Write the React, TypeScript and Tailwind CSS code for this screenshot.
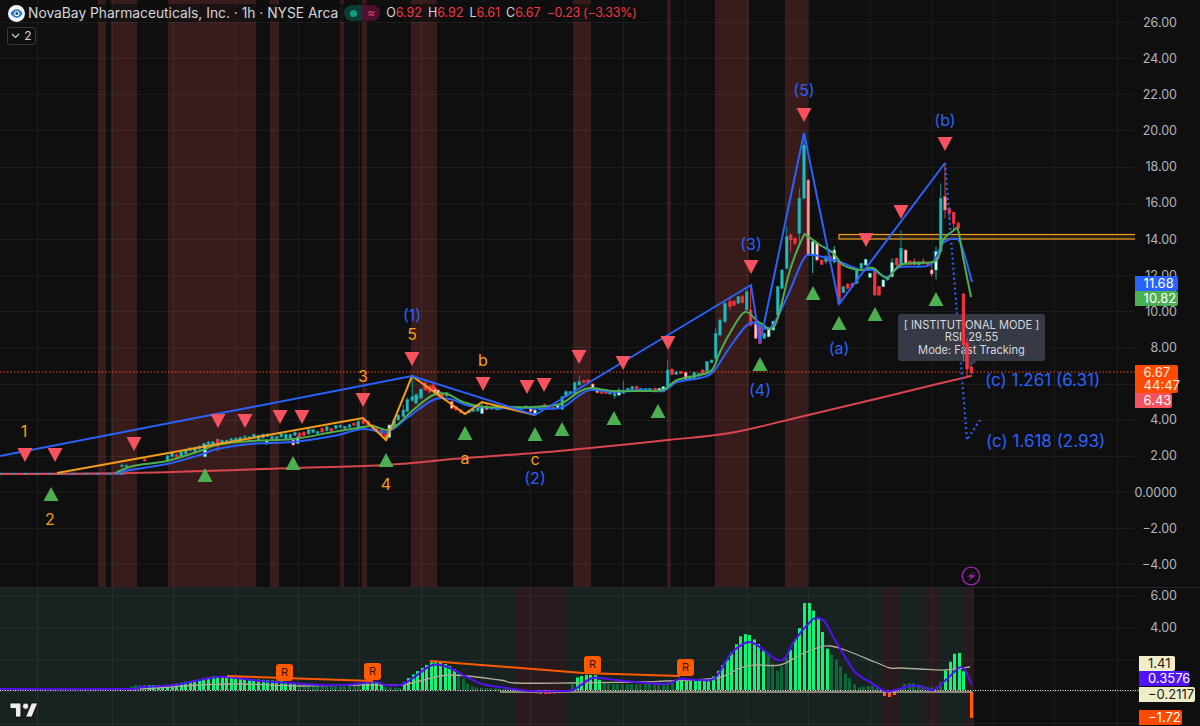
import React from "react";

type P = [number, number];
type C = [number, number, number, number?, number?, string?];

const XS = [37, 112, 173, 235, 298, 359, 421, 482, 530, 623, 685, 747, 808, 870, 932, 993, 1054, 1117];
const TOP_STRIPES: P[] = [[98, 106], [111, 137], [168, 256], [270, 279], [340, 344], [362, 367], [411, 437], [573, 591], [667, 671], [715, 749], [785, 808]];
const BOT_STRIPES: P[] = [[516, 565], [882, 900], [926, 939], [966, 974]];
const PRICES = ["26.00", "24.00", "22.00", "20.00", "18.00", "16.00", "14.00", "12.00", "10.00", "8.00", "", "4.00", "2.00", "0.0000", "−2.00", "−4.00"];

const BLUE: P[] = [[115, 473.5], [130, 470], [167, 464], [200, 455], [217, 449], [250, 444], [293, 442], [333, 436], [363, 429], [387, 432], [407, 418], [433, 400], [450, 399], [470, 406], [500, 408], [533, 408], [560, 408], [577, 397], [590, 390], [613, 392], [640, 390], [663, 391], [677, 382], [700, 378], [713, 372], [730, 347], [750, 323], [770, 328], [787, 297], [803, 260], [813, 255], [833, 260], [843, 263], [860, 270], [873, 270], [887, 277], [900, 267], [930, 265], [943, 243], [957, 239], [963, 250], [972, 282]];
const GREEN: P[] = [[115, 473], [133, 466], [167, 461], [200, 451], [217, 445], [250, 441], [293, 439], [333, 432], [363, 427], [373, 426], [387, 430], [397, 425], [413, 410], [433, 395], [447, 394], [463, 402], [483, 407], [500, 407], [533, 407], [560, 404], [577, 393], [590, 388], [613, 391], [640, 391], [663, 390], [677, 380], [700, 375], [712, 370], [720, 352], [730, 333], [745, 312], [760, 323], [775, 325], [790, 270], [803, 237], [807, 236], [820, 245], [833, 253], [843, 265], [860, 270], [873, 268], [887, 278], [900, 265], [920, 263], [937, 260], [943, 240], [953, 231], [958, 230], [963, 257], [971, 297]];
const RED: P[] = [[0, 474], [133, 473], [293, 468], [386, 465], [465, 458], [535, 453], [600, 447], [668, 440], [730, 433], [800, 417], [880, 398], [933, 385], [967, 377], [972, 376]];
const WAVE_BLUE: P[] = [[0, 456], [412, 376], [535, 415], [751, 285], [760, 343], [804, 133], [839, 304], [945, 163]];
const WAVE_ORANGE: P[] = [[57, 473], [363, 418], [386, 440], [412, 376], [465, 414], [482, 402], [535, 415]];
const DOWN: P[] = [[25, 448], [55, 448], [134, 437], [218, 414], [245, 414], [280, 410], [302, 410], [363, 393], [412, 352], [483, 377], [527, 380], [544, 378], [579, 350], [623, 356], [668, 336], [751, 260], [804, 108], [866, 233], [901, 205], [945, 137]];
const UP: P[] = [[51, 487], [205, 468], [293, 456], [386, 453], [465, 426], [535, 427], [562, 422], [614, 411], [658, 404], [760, 357], [813, 286], [839, 316], [875, 307], [936, 292]];
const ORANGE_LABELS: [string, number, number][] = [["1", 24, 431], ["2", 50, 519], ["3", 363, 376], ["4", 386, 484], ["5", 412, 334], ["a", 465, 458], ["b", 483, 360], ["c", 535, 459]];
const BLUE_LABELS: [string, number, number][] = [["(1)", 412, 315], ["(2)", 535, 478], ["(3)", 751, 244], ["(4)", 760, 390], ["(5)", 804, 90], ["(a)", 839, 348], ["(b)", 945, 120]];

const Z5: C[] = [[615, 255, 290, 250, 292, "w"], [653, 240, 258, 238, 275, "r"], [800, 240, 252, 238, 254, "w"], [880, 240, 255, 238, 256, "h"], [893, 232, 250, 228, 252, "w"], [1075, 185, 205, 180, 208, "t"], [1090, 180, 190, 178, 192, "r"], [1105, 185, 195, 182, 197, "r"], [1118, 195, 205, 193, 207, "r"], [1130, 200, 212, 198, 214, "r"], [1145, 210, 225, 208, 227, "r"], [1158, 222, 240, 220, 242, "r"], [1168, 195, 232, 193, 234, "w"], [1183, 178, 198, 175, 200, "t"], [1195, 165, 180, 163, 182, "t"], [1210, 150, 170, 135, 172, "t"], [1222, 118, 155, 112, 157, "t"], [1237, 110, 122, 50, 125, "t"], [1250, 105, 120, 100, 122, "t"], [1263, 88, 115, 85, 117, "t"], [1277, 75, 90, 65, 92, "r"], [1290, 78, 95, 75, 97, "r"], [1305, 85, 100, 80, 102, "h"], [1318, 95, 110, 90, 112, "r"]];
const Z7: C[] = [[48, 165, 190, 160, 192, "t"], [63, 148, 170, 145, 172, "t"], [75, 130, 148, 125, 150, "r"], [88, 140, 150, 138, 160, "r"], [100, 135, 150, 130, 152, "r"], [114, 150, 165, 148, 167, "h"], [127, 160, 170, 158, 172, "r"], [140, 158, 168, 156, 170, "t"], [155, 185, 205, 182, 207, "h"], [168, 200, 210, 198, 212, "r"], [182, 210, 218, 208, 220, "r"], [195, 218, 222, 216, 224, "r"], [208, 212, 218, 210, 220, "t"], [220, 208, 214, 206, 216, "t"], [233, 203, 213, 200, 215, "t"], [246, 200, 220, 185, 222, "w"], [260, 198, 208, 190, 210, "h"], [275, 203, 207, 201, 209, "t"], [290, 205, 208, 203, 210, "t"], [300, 203, 208, 201, 210, "t"], [315, 200, 205, 198, 207, "r"], [330, 203, 206, 201, 208, "r"], [350, 205, 207, 203, 209, "t"], [365, 203, 208, 201, 210, "t"], [378, 198, 205, 196, 207, "t"], [392, 203, 215, 201, 217, "h"], [405, 210, 220, 207, 222, "w"], [420, 205, 208, 203, 210, "t"], [433, 195, 200, 190, 202, "r"], [447, 202, 206, 200, 208, "r"], [460, 202, 206, 200, 208, "r"], [473, 197, 205, 195, 207, "w"], [487, 170, 208, 168, 210, "t"], [498, 155, 170, 150, 172, "t"], [511, 155, 162, 153, 164, "t"], [524, 128, 160, 125, 162, "t"], [538, 125, 135, 107, 137, "t"], [552, 122, 128, 120, 130, "r"], [565, 120, 128, 118, 130, "r"], [578, 132, 150, 130, 152, "h"], [592, 145, 158, 143, 160, "h"], [605, 155, 160, 153, 162, "r"], [618, 155, 160, 153, 162, "r"], [630, 155, 162, 153, 164, "t"], [644, 160, 168, 158, 177, "t"], [657, 150, 165, 145, 168, "w"], [670, 150, 160, 122, 162, "t"], [684, 145, 150, 143, 152, "t"], [697, 140, 148, 138, 150, "t"], [710, 140, 147, 138, 149, "r"], [723, 145, 148, 143, 150, "t"], [737, 146, 150, 144, 152, "t"], [750, 146, 150, 144, 152, "t"], [765, 145, 155, 143, 157, "r"], [778, 145, 152, 143, 154, "w"], [790, 140, 155, 138, 157, "w"], [803, 90, 138, 62, 140, "t"], [816, 88, 103, 85, 105, "r"], [829, 95, 103, 93, 105, "t"], [843, 95, 100, 93, 102, "r"], [857, 97, 118, 95, 120, "h"], [870, 108, 117, 106, 119, "t"], [883, 97, 118, 95, 120, "t"], [897, 100, 108, 98, 110, "t"], [908, 90, 100, 88, 102, "r"], [921, 65, 95, 63, 97, "t"], [935, 60, 68, 58, 70, "t"]];
const Z6: C[] = [[107, 760, 835, 745, 840, "t"], [120, 720, 765, 715, 770, "t"], [135, 670, 725, 665, 730, "t"], [150, 665, 680, 650, 690, "r"], [162, 665, 675, 660, 680, "r"], [175, 650, 670, 648, 672, "t"], [187, 650, 668, 645, 670, "r"], [200, 635, 690, 630, 692, "t"], [212, 690, 735, 615, 740, "r"], [227, 725, 775, 722, 778, "h"], [240, 740, 790, 738, 792, "r"], [253, 760, 775, 758, 778, "t"], [266, 745, 770, 742, 772, "w"], [280, 725, 750, 722, 752, "w"], [293, 620, 705, 618, 708, "t"], [306, 570, 625, 568, 628, "t"], [320, 470, 565, 440, 568, "t"], [332, 465, 480, 460, 515, "r"], [345, 475, 490, 472, 495, "r"], [358, 355, 460, 325, 490, "t"], [372, 195, 355, 160, 358, "t"], [385, 300, 525, 298, 528, "p"], [398, 485, 525, 482, 580, "w"], [411, 490, 540, 488, 545, "h"], [425, 540, 553, 538, 555, "r"], [438, 530, 545, 525, 553, "t"], [450, 530, 545, 525, 550, "r"], [463, 510, 545, 498, 550, "w"], [477, 545, 670, 542, 672, "r"], [490, 620, 638, 618, 640, "t"], [503, 612, 625, 610, 627, "r"], [517, 610, 620, 608, 622, "r"], [530, 565, 610, 563, 612, "t"], [544, 550, 565, 548, 567, "t"], [557, 538, 555, 536, 557, "w"], [570, 580, 592, 578, 594, "w"], [584, 575, 645, 573, 647, "r"], [597, 620, 645, 618, 647, "r"], [610, 600, 620, 598, 622, "w"], [623, 590, 600, 588, 602, "t"], [636, 548, 590, 535, 592, "w"], [650, 535, 555, 533, 557, "r"], [663, 505, 555, 450, 557, "t"], [677, 510, 552, 508, 554, "h"], [690, 543, 553, 541, 555, "r"], [703, 545, 553, 535, 555, "h"], [717, 545, 555, 543, 557, "t"], [730, 543, 552, 535, 554, "r"], [743, 548, 553, 546, 555, "r"], [755, 570, 582, 555, 590, "h"], [768, 515, 570, 500, 598, "w"], [782, 355, 515, 310, 517, "t"], [795, 350, 390, 248, 415, "p"], [808, 385, 400, 380, 415, "r"], [821, 397, 430, 395, 450, "r"], [835, 430, 445, 425, 450, "r"]];

const ENV: P[] = [[120, 689], [127, 688], [135, 685], [167, 685], [180, 683], [200, 679], [215, 676], [225, 676], [250, 679], [280, 681], [295, 683], [300, 684], [320, 685], [345, 686], [365, 683], [380, 683], [385, 687], [400, 688], [405, 681], [415, 673], [425, 666], [432, 662], [440, 662], [452, 667], [460, 675], [470, 686], [480, 688], [510, 689], [525, 690], [570, 690], [575, 678], [585, 675], [595, 675], [600, 680], [610, 684], [670, 684], [675, 681], [710, 680], [715, 675], [720, 668], [727, 660], [733, 650], [737, 643], [741, 636], [745, 634], [750, 635], [755, 640], [760, 645], [765, 653], [770, 655], [775, 671], [780, 670], [785, 660], [790, 652], [795, 640], [800, 628], [803, 603], [810, 603], [812, 609], [816, 613], [821, 624], [825, 643], [829, 653], [834, 656], [839, 663], [844, 672], [849, 677], [854, 684], [860, 688], [865, 686], [875, 686], [880, 690], [900, 690], [903, 684], [913, 683], [920, 685], [930, 688], [940, 686], [943, 675], [948, 666], [953, 656], [958, 649], [963, 665], [966, 690]];
const BRIGHT: P[] = [[145, 296], [360, 384], [404, 458], [573, 602], [675, 767], [790, 828], [943, 966]];
const PURPLE: P[] = [[0, 689], [127, 689], [140, 687], [175, 685], [210, 678], [227, 677], [260, 681], [290, 683], [320, 685], [345, 685], [375, 682], [385, 685], [400, 685], [410, 680], [430, 666], [440, 665], [450, 668], [465, 676], [482, 684], [500, 687], [530, 691], [565, 691], [575, 689], [590, 679], [600, 678], [625, 681], [665, 684], [680, 679], [700, 680], [715, 678], [730, 655], [745, 643], [755, 644], [770, 655], [778, 660], [785, 658], [795, 640], [810, 622], [817, 618], [825, 622], [835, 640], [855, 672], [870, 682], [885, 691], [895, 690], [910, 686], [920, 686], [933, 690], [948, 678], [962, 667], [972, 685]];
const PALE: P[] = [[127, 690], [200, 685], [240, 684], [300, 686], [360, 685], [400, 685], [420, 681], [450, 675], [500, 680], [515, 683], [570, 683], [640, 682], [665, 681], [717, 678], [740, 668], [755, 665], [780, 665], [800, 655], [820, 647], [830, 646], [845, 650], [875, 662], [890, 668], [900, 668], [920, 669], [945, 670], [970, 667]];

const interp = (a: P[], x: number) => {
  for (let i = 1; i < a.length; i++) {
    if (x <= a[i][0]) {
      const [x0, y0] = a[i - 1];
      const [x1, y1] = a[i];
      return y0 + ((y1 - y0) * (x - x0)) / (x1 - x0);
    }
  }
  return a[a.length - 1][1];
};
const rnd = (i: number) => {
  const s = Math.sin(i * 12.9898) * 43758.5453;
  return s - Math.floor(s);
};
const line = (a: P[]) => a.map((p) => p.join(",")).join(" ");
const smooth = (a: P[]) => {
  let d = `M${a[0][0]} ${a[0][1]}`;
  for (let i = 0; i < a.length - 1; i++) {
    const p0 = a[Math.max(i - 1, 0)];
    const p1 = a[i];
    const p2 = a[i + 1];
    const p3 = a[Math.min(i + 2, a.length - 1)];
    d += ` C${p1[0] + (p2[0] - p0[0]) / 6} ${p1[1] + (p2[1] - p0[1]) / 6} ${p2[0] - (p3[0] - p1[0]) / 6} ${p2[1] - (p3[1] - p1[1]) / 6} ${p2[0]} ${p2[1]}`;
  }
  return d;
};

const KIND: Record<string, [string, string]> = {
  t: ["#1fbcc4", "#178f88"],
  r: ["#f5333f", "#f5333f"],
  w: ["#d8f5ef", "#1fb5b5"],
  h: ["#f7dcdc", "#f5333f"],
  p: ["#ef9a9a", "#e5404c"],
};

function Candle({ x, t, b, wt, wb, k }: { x: number; t: number; b: number; wt: number; wb: number; k: string }) {
  const [fill, edge] = KIND[k];
  return (
    <g>
      <line x1={x} x2={x} y1={wt} y2={wb} stroke={edge} strokeWidth={1} />
      <rect x={x - 1.4} y={t} width={2.8} height={Math.max(b - t, 1.5)} fill={fill} stroke={edge} strokeWidth={0.5} />
    </g>
  );
}

function conv(list: C[], ox: number, oy: number) {
  return list.map(([zx, t, b, wt, wb, k], i) => (
    <Candle key={`${ox}-${i}`} x={ox + zx / 3} t={oy + t / 3} b={oy + b / 3} wt={oy + (wt ?? t) / 3} wb={oy + (wb ?? b) / 3} k={k ?? "t"} />
  ));
}

function smallCandles() {
  const out: React.ReactNode[] = [];
  for (let x = 122, i = 0; x < 358; x += 4.55, i++) {
    if (x < 165 && rnd(i + 7) > 0.35) continue;
    const g = interp(GREEN, x) - 2;
    const size = x < 150 ? 1.5 : 1.5 + rnd(i) * 3;
    const r = rnd(i + 50) > 0.78;
    const y = g - rnd(i + 90) * 3;
    out.push(<Candle key={i} x={x} t={y - size / 2} b={y + size / 2} wt={y - size / 2 - 1} wb={y + size / 2 + 1} k={r ? "r" : "t"} />);
  }
  return out;
}

function Tri({ x, y, up }: { x: number; y: number; up?: boolean }) {
  return up ? (
    <polygon points={`${x - 7.5},${y + 14} ${x + 7.5},${y + 14} ${x},${y}`} fill="#4caf50" />
  ) : (
    <polygon points={`${x - 7.5},${y} ${x + 7.5},${y} ${x},${y + 14}`} fill="#f7525f" />
  );
}

function Grid({ ys, height, top }: { ys: number[]; height: number; top: number }) {
  return (
    <g stroke="#ffffff" strokeOpacity={0.055} strokeWidth={1}>
      {XS.map((x) => (
        <line key={x} x1={x + 0.5} x2={x + 0.5} y1={top} y2={top + height} />
      ))}
      {ys.map((y) => (
        <line key={y} x1={0} x2={1139} y1={y + 0.5} y2={y + 0.5} />
      ))}
    </g>
  );
}

function PriceChart() {
  const ys = Array.from({ length: 16 }, (_, i) => Math.round(22 + i * 36.15));
  return (
    <svg className="absolute inset-0" width={1139} height={587} viewBox="0 0 1139 587">
      {TOP_STRIPES.map(([a, b]) => (
        <rect key={a} x={a} y={0} width={b - a} height={587} fill="#381c1c" />
      ))}
      <Grid ys={ys} height={587} top={0} />
      <line x1={0} x2={1139} y1={372} y2={372} stroke="#ff4a00" strokeWidth={1} strokeDasharray="1.5 2" />
      <rect x={839} y={234.5} width={310} height={4.5} fill="#f59e1b" fillOpacity={0.12} stroke="#f59e1b" strokeWidth={1.2} />
      <line x1={0} x2={125} y1={473.8} y2={473.8} stroke="#2962ff" strokeWidth={2} />
      <path d={smooth(RED)} fill="none" stroke="#d9464f" strokeWidth={2} />
      <line x1={0} x2={125} y1={473.8} y2={473.8} stroke="#1fb5b5" strokeWidth={1} strokeDasharray="3 9" />
      {smallCandles()}
      {conv(Z5, 0, 360)}
      {conv(Z7, 400, 340)}
      {conv(Z6, 680, 80)}
      <path d={smooth(BLUE)} fill="none" stroke="#2962ff" strokeWidth={2} />
      <path d={smooth(GREEN)} fill="none" stroke="#4caf50" strokeWidth={2} />
      <polyline points={line(WAVE_ORANGE)} fill="none" stroke="#f59e1b" strokeWidth={2} />
      <polyline points={line(WAVE_BLUE)} fill="none" stroke="#2962ff" strokeWidth={2} />
      <polyline points="945,163 967,440 980,420" fill="none" stroke="#2962ff" strokeWidth={2.2} strokeDasharray="2 3" />
      {DOWN.map(([x, y]) => (
        <Tri key={x} x={x} y={y} />
      ))}
      {UP.map(([x, y]) => (
        <Tri key={x} x={x} y={y} up />
      ))}
      <g className="text-[16px]" textAnchor="middle" dominantBaseline="central">
        {ORANGE_LABELS.map(([s, x, y]) => (
          <text key={s} x={x} y={y} fill="#f59e1b">
            {s}
          </text>
        ))}
        {BLUE_LABELS.map(([s, x, y]) => (
          <text key={s} x={x} y={y} fill="#2962ff">
            {s}
          </text>
        ))}
      </g>
      <g className="text-[17px]" dominantBaseline="central" fill="#2962ff">
        <text x={985} y={380}>(c) 1.261 (6.31)</text>
        <text x={986} y={441}>(c) 1.618 (2.93)</text>
      </g>
      <circle cx={971} cy={576} r={8.8} fill="none" stroke="#9c27b0" strokeWidth={1.3} />
      <path d="M975.5 571.5L967 576.8h4.2l-3 4.2 7.6-5.8h-4.5z" fill="#9c27b0" />
    </svg>
  );
}

function TopCandles() {
  return (
    <svg className="absolute inset-0" width={1139} height={587} viewBox="0 0 1139 587">
      <Candle x={963.5} t={294} b={345} wt={293} wb={362} k="r" />
      <Candle x={967} t={343} b={369} wt={338} wb={378} k="r" />
      <Candle x={971.5} t={367} b={373} wt={366} wb={374} k="r" />
    </svg>
  );
}

function MacdChart() {
  const bars: React.ReactNode[] = [];
  for (let x = 122, i = 0; x < 968; x += 4.55, i++) {
    if (x > 880 && x < 900) continue;
    const top = Math.min(interp(ENV, x), 689);
    const bright = BRIGHT.some(([a, b]) => x >= a && x <= b);
    const bx = Math.round(x - 1.5);
    if (x > 522 && x < 571) {
      bars.push(<rect key={i} x={bx} y={690} width={3} height={1 + Math.sin(((x - 522) / 49) * Math.PI) * 3} fill={x < 542 ? "#ff5a1f" : "#ff2d55"} />);
    } else {
      bars.push(<rect key={i} x={bx} y={top} width={3} height={690 - top} fill={bright ? "#0df57a" : "#0b6a38"} />);
    }
  }
  return (
    <svg className="absolute inset-0" width={1139} height={138} viewBox="0 588 1139 138">
      <rect x={0} y={588} width={966} height={138} fill="#182220" />
      {BOT_STRIPES.map(([a, b]) => (
        <rect key={a} x={a} y={588} width={b - a} height={138} fill="#291b1d" />
      ))}
      <Grid ys={[596, 628, 660, 691, 723]} height={138} top={588} />
      {bars}
      <rect x={883} y={691} width={3} height={5} fill="#ff5a1f" />
      <rect x={888} y={691} width={3} height={6} fill="#ff5a1f" />
      <rect x={893} y={691} width={3} height={4} fill="#ff5a1f" />
      <rect x={970} y={692} width={3.2} height={26} fill="#ff5a00" />
      <line x1={500} x2={972} y1={692} y2={692} stroke="#a9aa91" strokeWidth={1.3} />
      <line x1={0} x2={1139} y1={690.5} y2={690.5} stroke="#ffffff" strokeWidth={1} strokeDasharray="1 1.5" />
      <path d={smooth(PALE)} fill="none" stroke="#aeae96" strokeWidth={1.3} />
      <path d={smooth(PURPLE)} fill="none" stroke="#5411f0" strokeWidth={2} />
      <polyline points="227,676 373,681" fill="none" stroke="#ff5a00" strokeWidth={2} />
      <polyline points="430,661 583,673 680,676" fill="none" stroke="#ff5a00" strokeWidth={2} />
      <g transform="translate(10 699.9) scale(0.78)" fill="#eeeeee" stroke="#050505" strokeWidth={1}>
        <path d="M14 22H7V11H0V4h14v18zM28 22h-8l7.5-18h8L28 22z" />
        <circle cx={20} cy={8} r={4} />
      </g>
    </svg>
  );
}

function RBadge({ className }: { className: string }) {
  return <div className={`absolute w-[17px] h-[17px] rounded-[3px] bg-[#ff5a00] text-[#3a1405] text-[11px] flex items-center justify-center ${className}`}>R</div>;
}

function Tag({ className, children }: { className: string; children: React.ReactNode }) {
  return <div className={`absolute left-0 flex items-center pl-[9px] text-[13px] rounded-r-[2px] ${className}`}>{children}</div>;
}

function Eye() {
  return (
    <svg width="17" height="17" viewBox="0 0 17 17" className="shrink-0">
      <circle cx="8.5" cy="8.5" r="8.5" fill="#f3f6fa" />
      <path d="M2.4 8.2C4.4 5.2 7 4 9.2 4.2c2.2.2 4.2 1.9 5.4 4.2-1.2 2.5-3.2 4.2-5.4 4.4C7 13 4.4 11.4 2.4 8.2z" fill="#2a7bc4" />
      <circle cx="8.8" cy="8.5" r="2.6" fill="#f3f6fa" />
      <circle cx="8.8" cy="8.5" r="1.4" fill="#14507f" />
    </svg>
  );
}

export default function App() {
  return (
    <div className="w-[1200px] h-[726px] flex flex-col overflow-hidden bg-[#0f0f0f] text-[#b2b5be] font-['Inter','Noto_Sans',sans-serif]">
      <div className="flex h-[587px] shrink-0">
        <div className="relative w-[1139px] overflow-hidden">
          <PriceChart />
          <div className="absolute left-[898px] top-[314px] w-[147px] h-[47px] rounded-[3px] bg-[#363a45] flex flex-col items-center justify-center text-[11.1px] leading-[12.6px] text-[#d6d8df]">
            <div>[ INSTITUTIONAL MODE ]</div>
            <div>RSI: 29.55</div>
            <div>Mode: Fast Tracking</div>
          </div>
          <svg className="absolute left-[964px] top-[361px]" width="14" height="9" viewBox="0 0 14 9">
            <path d="M1 0h12L4 8z" fill="#363a45" />
          </svg>
          <TopCandles />
          <div className="absolute left-[5px] top-[4px] flex items-center gap-[3px] h-[18px] pl-[3px] pr-[5px] bg-[#0f0f0f]/75 rounded-[3px]">
            <Eye />
            <span className="text-[13.8px] text-[#d1d4dc] whitespace-nowrap">NovaBay Pharmaceuticals, Inc. · 1h · NYSE Arca</span>
            <span className="ml-[3px] flex h-[16px] w-[36px] rounded-full overflow-hidden">
              <span className="w-1/2 bg-[#0b3d36] flex items-center justify-center">
                <span className="w-[7px] h-[7px] rounded-full bg-[#0e9f88]" />
              </span>
              <span className="w-1/2 bg-[#4a1230] flex items-center justify-center text-[#f23a6a] text-[12px] leading-none">≈</span>
            </span>
            <span className="ml-[3px] flex gap-[6px] text-[12.5px] text-[#f23645] whitespace-nowrap">
              <span><span className="text-[#d1d4dc]">O</span>6.92</span>
              <span><span className="text-[#d1d4dc]">H</span>6.92</span>
              <span><span className="text-[#d1d4dc]">L</span>6.61</span>
              <span><span className="text-[#d1d4dc]">C</span>6.67</span>
              <span className="tracking-[-0.3px]">−0.23 (−3.33%)</span>
            </span>
          </div>
          <div className="absolute left-[7px] top-[27px] w-[29px] h-[18px] rounded-[3px] border border-[#3a3a3a] flex items-center justify-center gap-[4px] text-[12px] text-[#d1d4dc]">
            <svg width="9" height="6" viewBox="0 0 9 6"><path d="M1 1l3.5 3.5L8 1" fill="none" stroke="#d1d4dc" strokeWidth="1.1" /></svg>
            2
          </div>
        </div>
        <div className="relative flex-1">
          <div className="flex flex-col pt-[5px] pr-[23px] items-end text-[12.5px]">
            {PRICES.map((p, i) => (
              <div key={i} className="h-[36.15px] flex items-center">{p}</div>
            ))}
          </div>
          <Tag className="top-[276px] h-[14.5px] w-[43px] bg-[#2962ff] text-white">11.68</Tag>
          <Tag className="top-[291px] h-[14.5px] w-[43px] bg-[#4caf50] text-white">10.82</Tag>
          <div className="absolute left-0 top-[365px] w-[43px] h-[28px] bg-[#ff4a00] text-white/90 text-[13px] leading-[13px] pl-[9px] pt-[1px] rounded-r-[2px]">
            <div>6.67</div>
            <div>44:47</div>
          </div>
          <Tag className="top-[393px] h-[15px] w-[37px] bg-[#f7525f] text-white">6.43</Tag>
        </div>
      </div>
      <div className="h-[1px] shrink-0 bg-[#262626]" />
      <div className="flex flex-1 min-h-0">
        <div className="relative w-[1139px] overflow-hidden">
          <MacdChart />
          <RBadge className="left-[276px] top-[76px]" />
          <RBadge className="left-[364px] top-[75px]" />
          <RBadge className="left-[584px] top-[68px]" />
          <RBadge className="left-[677px] top-[71px]" />
        </div>
        <div className="relative flex-1 overflow-hidden">
          <div className="flex flex-col items-end pr-[23px] -mt-[8px] text-[12.5px]">
            <div className="h-[32px] flex items-center">6.00</div>
            <div className="h-[32px] flex items-center">4.00</div>
          </div>
          <Tag className="top-[68px] h-[15px] w-[36px] bg-[#f0edc9] text-[#1b1b16]">1.41</Tag>
          <Tag className="top-[83px] h-[15px] w-[50px] bg-[#5112ff] text-white">0.3576</Tag>
          <Tag className="top-[99px] h-[15px] w-[56px] bg-[#f0edc9] text-[#1b1b16]">−0.2117</Tag>
          <Tag className="top-[122px] h-[15px] w-[43px] bg-[#ff4a00] text-white">−1.72</Tag>
        </div>
      </div>
    </div>
  );
}
